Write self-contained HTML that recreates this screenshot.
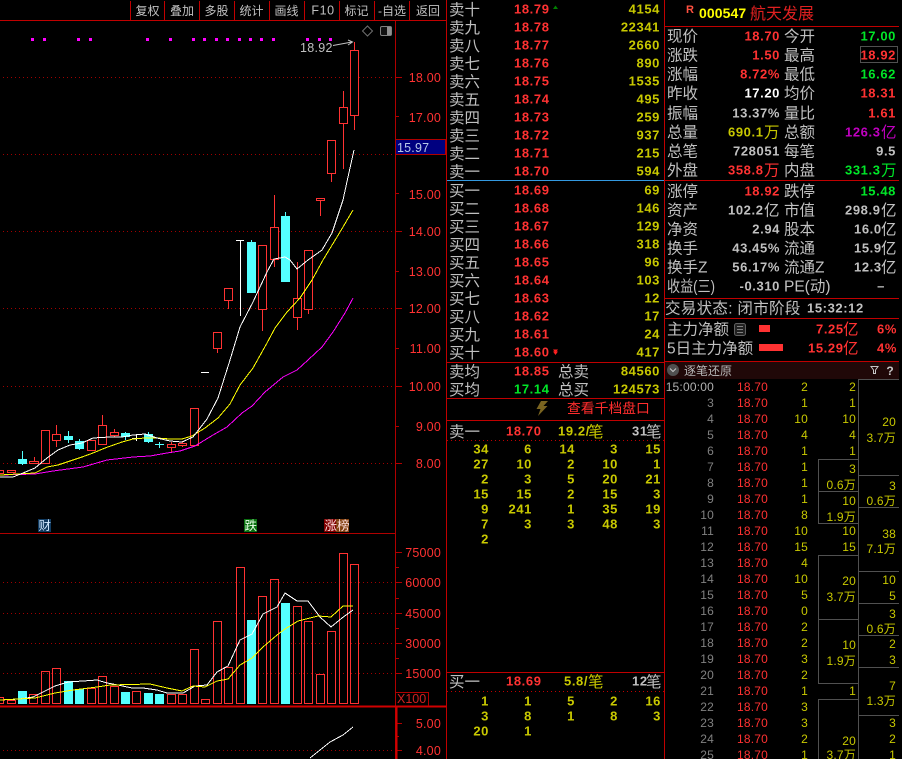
<!DOCTYPE html>
<html lang="zh">
<head>
<meta charset="utf-8">
<title>000547 航天发展</title>
<style>
html,body{margin:0;padding:0;background:#000;width:902px;height:759px;overflow:hidden}
svg{display:block;position:absolute;left:0;top:0}
text{font-family:"Liberation Sans","WenQuanYi Zen Hei","Noto Sans CJK SC",sans-serif;white-space:pre}
.c{font-size:15.5px;fill:#c0c0c0}
.b{font-size:13px;font-weight:bold;letter-spacing:.6px}
.r{fill:#ff3232}.g{fill:#00e628}.y{fill:#c8c800}.w{fill:#c0c0c0}.m{fill:#c000c0}.gr{fill:#808080}
.e{text-anchor:end}
.ax{font-size:12.5px;fill:#ff3232;text-anchor:end;letter-spacing:.2px}
.t{font-size:12px;letter-spacing:.2px}
.tb{font-size:12px;fill:#c0c0c0;text-anchor:middle}
.ln{shape-rendering:crispEdges}
polyline{shape-rendering:crispEdges}
</style>
</head>
<body>
<svg width="902" height="759" viewBox="0 0 902 759" xmlns="http://www.w3.org/2000/svg">
<rect width="902" height="759" fill="#000"/>

<!-- toolbar -->
<g class="ln" stroke="#c00000" fill="none">
<path d="M0 20.500H446M130.500 1V20M164.500 1V20M199.500 1V20M234.500 1V20M269.500 1V20M304.500 1V20M339.500 1V20M374.500 1V20M409.500 1V20"/>
</g>
<text class="tb" x="147.500" y="15">复权</text>
<text class="tb" x="182" y="15">叠加</text>
<text class="tb" x="216.500" y="15">多股</text>
<text class="tb" x="251.500" y="15">统计</text>
<text class="tb" x="286.500" y="15">画线</text>
<text class="tb" x="323" y="14.500" style="letter-spacing:.6px;font-size:12.500px">F10</text>
<text class="tb" x="356.500" y="15">标记</text>
<text class="tb" x="392" y="15">-自选</text>
<text class="tb" x="428" y="15">返回</text>

<!-- grid -->
<g class="ln" stroke="#a00000" stroke-dasharray="1 3" fill="none">
<path d="M3 77.500H395M3 154.500H395M3 231.500H395M3 308.500H395M3 386.500H395M3 463.500H395"/>
<path d="M3 582.500H395M3 613.500H395M3 643.500H395M3 673.500H395M3 750.500H395"/>
</g>

<!-- axis -->
<g class="ln" stroke="#b00000" fill="none">
<path d="M395.500 21V759"/>
<path d="M395 77.500H402M395 116.500H399M395 154.500H402M395 193.500H399M395 231.500H402M395 271.500H399M395 308.500H402M395 348.500H399M395 386.500H402M395 426.500H399M395 463.500H402"/>
<path d="M395 552.500H402M395 567.500H399M395 582.500H402M395 598.500H399M395 613.500H402M395 628.500H399M395 643.500H402M395 658.500H399M395 673.500H402"/>
<path d="M395 723.500H402M395 736.500H399M395 750.500H402"/>
<path d="M0 533.500H395"/>
</g>
<path class="ln" d="M0 706.500H446M396.500 706V759" stroke="#d00000" stroke-width="2" fill="none"/>

<g>
<text class="ax" x="441" y="82">18.00</text>
<text class="ax" x="441" y="122">17.00</text>
<text class="ax" x="441" y="199">15.00</text>
<text class="ax" x="441" y="236">14.00</text>
<text class="ax" x="441" y="276">13.00</text>
<text class="ax" x="441" y="313">12.00</text>
<text class="ax" x="441" y="353">11.00</text>
<text class="ax" x="441" y="391">10.00</text>
<text class="ax" x="441" y="431">9.00</text>
<text class="ax" x="441" y="468">8.00</text>
<text class="ax" x="441" y="557">75000</text>
<text class="ax" x="441" y="587">60000</text>
<text class="ax" x="441" y="618">45000</text>
<text class="ax" x="441" y="648">30000</text>
<text class="ax" x="441" y="678">15000</text>
<text class="ax" x="441" y="728">5.00</text>
<text class="ax" x="441" y="755">4.00</text>
</g>

<!-- current price flag -->
<rect class="ln" x="395.500" y="139.500" width="50" height="15" fill="#000080" stroke="#b00000"/>
<text x="397" y="152" style="font-size:12.5px;letter-spacing:.2px" fill="#b8c8e8">15.97</text>

<!-- magenta dots -->
<g class="ln" fill="#ff00ff">
<rect x="31" y="38" width="3" height="3"/><rect x="43" y="38" width="3" height="3"/><rect x="77" y="38" width="3" height="3"/><rect x="89" y="38" width="3" height="3"/><rect x="146" y="38" width="3" height="3"/><rect x="169" y="38" width="3" height="3"/><rect x="192" y="38" width="3" height="3"/><rect x="203" y="38" width="3" height="3"/><rect x="215" y="38" width="3" height="3"/><rect x="226" y="38" width="3" height="3"/><rect x="238" y="38" width="3" height="3"/><rect x="249" y="38" width="3" height="3"/><rect x="260" y="38" width="3" height="3"/><rect x="272" y="38" width="3" height="3"/><rect x="306" y="38" width="3" height="3"/><rect x="318" y="38" width="3" height="3"/><rect x="329" y="38" width="3" height="3"/>
</g>

<!-- top right chart icons -->
<path d="M367.500 26L372.500 31L367.500 36L362.500 31Z" fill="none" stroke="#707070"/>
<rect x="380.500" y="26.500" width="11" height="9" rx="1.500" fill="#111" stroke="#808080"/>
<rect class="ln" x="387" y="27" width="4" height="8" fill="#909090"/>
<text x="300" y="52" style="font-size:12.500px;letter-spacing:.3px" fill="#c0c0c0">18.92</text>
<path d="M333 45.500L352 42M348 40L352.500 42L348 45" fill="none" stroke="#c0c0c0"/>

<!-- candles: red wicks -->
<g class="ln">
<path stroke="#ff3232" fill="none" d="M11.500 472V473M34.500 457V461M56.500 425V447M102.500 415V425M114.500 429V437M171.500 442V453M182.500 441V447M217.500 348V353M228.500 300V309M262.500 309V331M274.500 195V267M297.500 262V330M308.500 309V314M320.500 200V216M331.500 173V182M343.500 91V169M354.500 42V130"/>
<g fill="#000" stroke="#ff3232">
<rect x="-1.500" y="470.500" width="5" height="3"/>
<rect x="7.500" y="470.500" width="8" height="2"/>
<rect x="29.500" y="461.500" width="9" height="2"/>
<rect x="41.500" y="430.500" width="8" height="33"/>
<rect x="52.500" y="434.500" width="8" height="6"/>
<rect x="87.500" y="440.500" width="8" height="10"/>
<rect x="98.500" y="425.500" width="8" height="19"/>
<rect x="110.500" y="432.500" width="8" height="3"/>
<rect x="167.500" y="444.500" width="8" height="3"/>
<rect x="178.500" y="443.500" width="8" height="2"/>
<rect x="190.500" y="408.500" width="8" height="37"/>
<rect x="213.500" y="332.500" width="8" height="16"/>
<rect x="224.500" y="288.500" width="8" height="12"/>
<rect x="258.500" y="245.500" width="8" height="64"/>
<rect x="270.500" y="227.500" width="8" height="32"/>
<rect x="293.500" y="298.500" width="8" height="19"/>
<rect x="304.500" y="250.500" width="8" height="59"/>
<rect x="316.500" y="198.500" width="8" height="2"/>
<rect x="327.500" y="140.500" width="8" height="33"/>
<rect x="339.500" y="107.500" width="8" height="16"/>
<rect x="350.500" y="50.500" width="8" height="65"/>
</g>
<path stroke="#54ffff" fill="none" d="M22.500 451V465M68.500 431V443M79.500 439V450M125.500 432V440M148.500 432V443M159.500 442V448M155 444.500H164M251.500 240V243M285.500 212V216"/>
<g fill="#54ffff">
<rect x="18" y="459" width="9" height="5"/>
<rect x="64" y="436" width="9" height="4"/>
<rect x="75" y="441" width="9" height="8"/>
<rect x="121" y="433" width="9" height="4"/>
<rect x="144" y="434" width="9" height="8"/>
<rect x="247" y="242" width="9" height="51"/>
<rect x="281" y="216" width="9" height="66"/>
</g>
<path stroke="#ffffff" fill="none" d="M136.500 434V441M132 438.500H141M201 372.500H209M236 240.500H244M240.500 240V316"/>
</g>

<!-- MA lines -->
<g fill="none" stroke-width="1">
<polyline stroke="#ff00ff" points="0,475 35,474 53,471 83,467 107,460 133,457 150,456 167,453 180,451 195,446 213,435 227,427 242,413 252,406 265,392 283,377 297,370 308,360 322,347 333,332 345,313 353,298"/>
<polyline stroke="#ffff00" points="0,475 35,473 47,467 58,465 82,457 93,453 105,448 122,442 133,439 145,438 157,438 170,439 182,439 192,436 205,428 218,418 230,404 240,385 253,368 267,343 275,328 287,312 300,298 312,280 323,260 337,237 343,227 353,210"/>
<polyline stroke="#ffffff" points="0,477 13,477 23,473 35,468 47,458 58,450 70,445 82,443 93,438 110,437 122,437 133,435 145,434 157,438 170,441 182,442 193,437 207,419 218,398 230,360 240,327 253,302 267,272 274,259 285,257 290,260 297,269 308,260 322,250 332,233 343,200 348,177 354,150"/>
</g>

<!-- event tags -->
<rect x="38" y="519" width="13" height="13" fill="#103a60"/>
<text x="38.500" y="530" style="font-size:12.500px" fill="#d0e8ff">财</text>
<rect x="244" y="519" width="13" height="13" fill="#0a7010"/>
<text x="244.500" y="530" style="font-size:12.500px" fill="#e8ffe8">跌</text>
<rect x="324" y="519" width="13" height="13" fill="#800000"/>
<rect x="336" y="519" width="13" height="13" fill="#804010"/>
<text x="324.500" y="530" style="font-size:12.500px" fill="#ffe0e0">涨榜</text>

<!-- volume bars -->
<g class="ln" fill="none" stroke="#ff3232">
<rect x="-1.500" y="697.500" width="5" height="6"/>
<rect x="7.500" y="700.500" width="8" height="3"/>
<rect x="29.500" y="694.500" width="8" height="9"/>
<rect x="41.500" y="671.500" width="8" height="32"/>
<rect x="52.500" y="668.500" width="8" height="35"/>
<rect x="87.500" y="688.500" width="8" height="15"/>
<rect x="98.500" y="676.500" width="8" height="27"/>
<rect x="110.500" y="686.500" width="8" height="17"/>
<rect x="132.500" y="691.500" width="8" height="12"/>
<rect x="167.500" y="694.500" width="8" height="9"/>
<rect x="178.500" y="694.500" width="8" height="9"/>
<rect x="190.500" y="649.500" width="8" height="54"/>
<rect x="201.500" y="699.500" width="8" height="4"/>
<rect x="213.500" y="621.500" width="8" height="82"/>
<rect x="224.500" y="667.500" width="8" height="36"/>
<rect x="236.500" y="567.500" width="8" height="136"/>
<rect x="258.500" y="596.500" width="8" height="107"/>
<rect x="270.500" y="579.500" width="8" height="124"/>
<rect x="293.500" y="606.500" width="8" height="97"/>
<rect x="304.500" y="621.500" width="8" height="82"/>
<rect x="316.500" y="674.500" width="8" height="29"/>
<rect x="327.500" y="631.500" width="8" height="72"/>
<rect x="339.500" y="553.500" width="8" height="150"/>
<rect x="350.500" y="564.500" width="8" height="139"/>
</g>
<g class="ln" fill="#54ffff">
<rect x="18" y="691" width="9" height="13"/>
<rect x="64" y="681" width="9" height="23"/>
<rect x="75" y="689" width="9" height="15"/>
<rect x="121" y="692" width="9" height="12"/>
<rect x="144" y="693" width="9" height="11"/>
<rect x="155" y="694" width="9" height="10"/>
<rect x="247" y="620" width="9" height="84"/>
<rect x="281" y="603" width="9" height="101"/>
</g>
<g fill="none">
<polyline stroke="#ffffff" points="0,700 20,699 33,697 43,692 55,686 68,682 83,681 97,680 107,683 113,684 132,688 143,688 157,690 167,693 183,693 195,686 207,685 217,672 228,666 240,640 252,634 263,614 277,607 285,593 297,601 308,601 320,617 331,627 342,618 353,610"/>
<polyline stroke="#ffff00" points="0,700 35,698 55,693 73,690 97,687 110,685 150,684 167,688 182,691 193,686 205,687 217,681 228,679 240,665 252,658 263,647 277,635 285,629 298,621 318,616 331,617 343,606 353,606"/>
<polyline stroke="#ffffff" points="310,758 330,742 343,735 353,727"/>
</g>
<path class="ln" d="M395.500 692.500H428.500V706" fill="none" stroke="#b00000"/>
<text x="397" y="703" style="font-size:12.500px" fill="#d02020">X100</text>

<!-- panel dividers -->
<g class="ln" fill="none" stroke="#c00000">
<path d="M446.500 0V759M664.500 0V759"/>
<path d="M446 362.500H664M446 398.500H664M446 420.500H664M446 672.500H664"/>
<path d="M664 26.500H899M664 180.500H899M664 298.500H899M664 318.500H899M664 361.500H899"/>
</g>
<path class="ln" d="M447 180.500H664" stroke="#3399e0" fill="none"/>
<path class="ln" d="M447 440.500H664M447 691.500H664" stroke="#c00000" stroke-dasharray="1 3" fill="none"/>

<!-- sell book -->
<g class="c">
<text x="449" y="15">卖十</text><text x="449" y="33">卖九</text><text x="449" y="51">卖八</text><text x="449" y="69">卖七</text><text x="449" y="87">卖六</text><text x="449" y="105">卖五</text><text x="449" y="123">卖四</text><text x="449" y="141">卖三</text><text x="449" y="159">卖二</text><text x="449" y="177">卖一</text>
<text x="449" y="196">买一</text><text x="449" y="214">买二</text><text x="449" y="232">买三</text><text x="449" y="250">买四</text><text x="449" y="268">买五</text><text x="449" y="286">买六</text><text x="449" y="304">买七</text><text x="449" y="322">买八</text><text x="449" y="340">买九</text><text x="449" y="358">买十</text>
<text x="449" y="377">卖均</text><text x="449" y="395">买均</text>
<text x="558" y="377">总卖</text><text x="558" y="395">总买</text>
<text x="449" y="437">卖一</text><text x="449" y="687">买一</text>
</g>
<g class="b r">
<text x="514" y="13.500">18.79</text><text x="514" y="31.500">18.78</text><text x="514" y="49.500">18.77</text><text x="514" y="67.500">18.76</text><text x="514" y="85.500">18.75</text><text x="514" y="103.500">18.74</text><text x="514" y="121.500">18.73</text><text x="514" y="139.500">18.72</text><text x="514" y="157.500">18.71</text><text x="514" y="175.500">18.70</text>
<text x="514" y="194.500">18.69</text><text x="514" y="212.500">18.68</text><text x="514" y="230.500">18.67</text><text x="514" y="248.500">18.66</text><text x="514" y="266.500">18.65</text><text x="514" y="284.500">18.64</text><text x="514" y="302.500">18.63</text><text x="514" y="320.500">18.62</text><text x="514" y="338.500">18.61</text><text x="514" y="356.500">18.60</text>
<text x="514" y="375.500">18.85</text>
<text x="506" y="435.500">18.70</text><text x="506" y="685.500">18.69</text>
</g>
<text class="b g" x="514" y="393.500">17.14</text>
<g class="b y e">
<text x="660" y="13.500">4154</text><text x="660" y="31.500">22341</text><text x="660" y="49.500">2660</text><text x="660" y="67.500">890</text><text x="660" y="85.500">1535</text><text x="660" y="103.500">495</text><text x="660" y="121.500">259</text><text x="660" y="139.500">937</text><text x="660" y="157.500">215</text><text x="660" y="175.500">594</text>
<text x="660" y="194.500">69</text><text x="660" y="212.500">146</text><text x="660" y="230.500">129</text><text x="660" y="248.500">318</text><text x="660" y="266.500">96</text><text x="660" y="284.500">103</text><text x="660" y="302.500">12</text><text x="660" y="320.500">17</text><text x="660" y="338.500">24</text><text x="660" y="356.500">417</text>
<text x="660" y="375.500">84560</text><text x="660" y="393.500">124573</text>
</g>
<path d="M553 9L555.500 5.500L558 9Z" fill="#008000"/>
<path d="M553 349.500H558L556.500 351.500H558L555.500 355L553 351.500H554.500Z" fill="#ff2020"/>

<!-- lightning + link -->
<path d="M541 401H548L543.500 406H547.500L538 416L540.500 409H536.500Z" fill="#7a6420"/>
<text x="567" y="413" style="font-size:13.800px" fill="#ff2d2d">查看千档盘口</text>

<!-- queue headers -->
<text class="b y" x="558" y="435.500">19.2/</text><text x="588" y="437" style="font-size:15.500px" fill="#c8c800">笔</text>
<text class="b w" x="632" y="435.500">31</text><text x="646" y="437" style="font-size:15.500px" fill="#c0c0c0">笔</text>
<text class="b y" x="564" y="685.500">5.8/</text><text x="588" y="687" style="font-size:15.500px" fill="#c8c800">笔</text>
<text class="b w" x="632" y="685.500">12</text><text x="646" y="687" style="font-size:15.500px" fill="#c0c0c0">笔</text>

<!-- queue grid -->
<g class="b y e">
<text x="489" y="453.500">34</text><text x="532" y="453.500">6</text><text x="575" y="453.500">14</text><text x="618" y="453.500">3</text><text x="661" y="453.500">15</text>
<text x="489" y="468.500">27</text><text x="532" y="468.500">10</text><text x="575" y="468.500">2</text><text x="618" y="468.500">10</text><text x="661" y="468.500">1</text>
<text x="489" y="483.500">2</text><text x="532" y="483.500">3</text><text x="575" y="483.500">5</text><text x="618" y="483.500">20</text><text x="661" y="483.500">21</text>
<text x="489" y="498.500">15</text><text x="532" y="498.500">15</text><text x="575" y="498.500">2</text><text x="618" y="498.500">15</text><text x="661" y="498.500">3</text>
<text x="489" y="513.500">9</text><text x="532" y="513.500">241</text><text x="575" y="513.500">1</text><text x="618" y="513.500">35</text><text x="661" y="513.500">19</text>
<text x="489" y="528.500">7</text><text x="532" y="528.500">3</text><text x="575" y="528.500">3</text><text x="618" y="528.500">48</text><text x="661" y="528.500">3</text>
<text x="489" y="543.500">2</text>
<text x="489" y="705.500">1</text><text x="532" y="705.500">1</text><text x="575" y="705.500">5</text><text x="618" y="705.500">2</text><text x="661" y="705.500">16</text>
<text x="489" y="720.500">3</text><text x="532" y="720.500">8</text><text x="575" y="720.500">1</text><text x="618" y="720.500">8</text><text x="661" y="720.500">3</text>
<text x="489" y="735.500">20</text><text x="532" y="735.500">1</text>
</g>

<!-- stock header -->
<text x="686" y="13" style="font-size:11px;font-weight:bold" fill="#ff5040">R</text>
<text x="699" y="18" style="font-size:14px;font-weight:bold;letter-spacing:.1px" fill="#ffff00">000547</text>
<text x="750" y="19" style="font-size:16px" fill="#e02020">航天发展</text>

<!-- quote labels -->
<g class="c">
<text x="667" y="41.500">现价</text><text x="784" y="41.500">今开</text>
<text x="667" y="60.500">涨跌</text><text x="784" y="60.500">最高</text>
<text x="667" y="79.500">涨幅</text><text x="784" y="79.500">最低</text>
<text x="667" y="98.500">昨收</text><text x="784" y="98.500">均价</text>
<text x="667" y="118.500">振幅</text><text x="784" y="118.500">量比</text>
<text x="667" y="137.500">总量</text><text x="784" y="137.500">总额</text>
<text x="667" y="156.500">总笔</text><text x="784" y="156.500">每笔</text>
<text x="667" y="175.500">外盘</text><text x="784" y="175.500">内盘</text>
<text x="667" y="196.500">涨停</text><text x="784" y="196.500">跌停</text>
<text x="667" y="215.500">资产</text><text x="784" y="215.500">市值</text>
<text x="667" y="234.500">净资</text><text x="784" y="234.500">股本</text>
<text x="667" y="253.500">换手</text><text x="784" y="253.500">流通</text>
<text x="667" y="272.500">换手Z</text><text x="784" y="272.500">流通Z</text>
<text x="667" y="291.500" textLength="48" lengthAdjust="spacingAndGlyphs">收益(三)</text><text x="784" y="291.500">PE(动)</text>
<text x="665" y="313.500" style="letter-spacing:.3px">交易状态: 闭市阶段</text>
<text x="667" y="334.500">主力净额</text>
<text x="667" y="353.500">5日主力净额</text>
</g>

<!-- quote values -->
<rect class="ln" x="860.500" y="46.500" width="37" height="16" fill="none" stroke="#505050"/>
<g class="b e">
<text class="r" x="780" y="40.500">18.70</text><text class="g" x="896" y="40.500">17.00</text>
<text class="r" x="780" y="59.500">1.50</text><text class="r" x="896" y="59.500">18.92</text>
<text class="r" x="780" y="78.500">8.72%</text><text class="g" x="896" y="78.500">16.62</text>
<text x="780" y="97.500" fill="#ffffff">17.20</text><text class="r" x="896" y="97.500">18.31</text>
<text class="w" x="780" y="117.500">13.37%</text><text class="r" x="896" y="117.500">1.61</text>
<text class="w" x="780" y="155.500">728051</text><text class="w" x="896" y="155.500">9.5</text>
<text class="r" x="780" y="195.500">18.92</text><text class="g" x="896" y="195.500">15.48</text>
<text class="w" x="780" y="233.500">2.94</text>
<text class="w" x="780" y="252.500">43.45%</text>
<text class="w" x="780" y="271.500">56.17%</text>
<text class="w" x="780" y="290.500">-0.310</text>
<text class="w" x="885" y="290.500">–</text>
<text class="r" x="897" y="333.500">6%</text>
<text class="r" x="897" y="352.500">4%</text>
</g>
<g class="b">
<text class="y" x="728" y="136.500">690.1</text><text x="764" y="137.500" style="font-size:15.500px;font-weight:normal" fill="#c8c800">万</text>
<text class="m" x="845" y="136.500">126.3</text><text x="881" y="137.500" style="font-size:15.500px;font-weight:normal" fill="#c000c0">亿</text>
<text class="r" x="728" y="174.500">358.8</text><text x="764" y="175.500" style="font-size:15.500px;font-weight:normal" fill="#ff3232">万</text>
<text class="g" x="845" y="174.500">331.3</text><text x="881" y="175.500" style="font-size:15.500px;font-weight:normal" fill="#00e628">万</text>
<text class="w" x="728" y="214.500">102.2</text><text x="764" y="215.500" style="font-size:15.500px;font-weight:normal" fill="#c0c0c0">亿</text>
<text class="w" x="845" y="214.500">298.9</text><text x="881" y="215.500" style="font-size:15.500px;font-weight:normal" fill="#c0c0c0">亿</text>
<text class="w" x="854" y="233.500">16.0</text><text x="881" y="234.500" style="font-size:15.500px;font-weight:normal" fill="#c0c0c0">亿</text>
<text class="w" x="854" y="252.500">15.9</text><text x="881" y="253.500" style="font-size:15.500px;font-weight:normal" fill="#c0c0c0">亿</text>
<text class="w" x="854" y="271.500">12.3</text><text x="881" y="272.500" style="font-size:15.500px;font-weight:normal" fill="#c0c0c0">亿</text>
<text class="w" x="807" y="312.500">15:32:12</text>
<text class="r" x="816" y="333.500">7.25</text><text x="843" y="334.500" style="font-size:15.500px;font-weight:normal" fill="#ff3232">亿</text>
<text class="r" x="808" y="352.500">15.29</text><text x="843" y="353.500" style="font-size:15.500px;font-weight:normal" fill="#ff3232">亿</text>
</g>

<!-- net flow -->
<rect x="734.500" y="323.500" width="11" height="12" rx="2" fill="#222" stroke="#606060"/>
<path class="ln" d="M737 326.500H743M737 329.500H743M737 332.500H743" stroke="#808080"/>
<rect class="ln" x="759" y="325" width="11" height="7" fill="#ff3232"/>
<rect class="ln" x="759" y="344" width="24" height="7" fill="#ff3232"/>

<!-- tick header -->
<rect class="ln" x="665" y="362" width="234" height="17" fill="#200808"/>
<circle cx="673" cy="370" r="6" fill="#505050"/>
<path d="M670 368.500L673 371.500L676 368.500" fill="none" stroke="#c8c8c8"/>
<text x="684" y="375" style="font-size:12px" fill="#b8b8b8">逐笔还原</text>
<path d="M871 366.500H878L875.500 370V373.500H873.500V370Z" fill="none" stroke="#c8c8c8"/>
<text x="890" y="375" style="font-size:12px;font-weight:bold;text-anchor:middle" fill="#c8c8c8">?</text>

<!-- tick table borders -->
<g class="ln" fill="none" stroke="#505050">
<path d="M858.500 379V759M858 379.500H899"/>
<path d="M818.500 459V523M818 459.500H858M818 491.500H858M818 523.500H858"/>
<path d="M818.500 555V683M818 555.500H858M818 619.500H858M818 683.500H858"/>
<path d="M818.500 699V759M818 699.500H858"/>
<path d="M858 475.500H899M858 507.500H899M858 571.500H899M858 603.500H899M858 635.500H899M858 667.500H899M858 715.500H899"/>
</g>

<!-- tick table -->
<g class="t e gr">
<text x="714" y="391" style="fill:#b0b0b0">15:00:00</text>
<text x="714" y="407">3</text><text x="714" y="423">4</text><text x="714" y="439">5</text><text x="714" y="455">6</text><text x="714" y="471">7</text><text x="714" y="487">8</text><text x="714" y="503">9</text><text x="714" y="519">10</text><text x="714" y="535">11</text><text x="714" y="551">12</text><text x="714" y="567">13</text><text x="714" y="583">14</text><text x="714" y="599">15</text><text x="714" y="615">16</text><text x="714" y="631">17</text><text x="714" y="647">18</text><text x="714" y="663">19</text><text x="714" y="679">20</text><text x="714" y="695">21</text><text x="714" y="711">22</text><text x="714" y="727">23</text><text x="714" y="743">24</text><text x="714" y="759">25</text>
</g>
<g class="t r">
<text x="737" y="391">18.70</text><text x="737" y="407">18.70</text><text x="737" y="423">18.70</text><text x="737" y="439">18.70</text><text x="737" y="455">18.70</text><text x="737" y="471">18.70</text><text x="737" y="487">18.70</text><text x="737" y="503">18.70</text><text x="737" y="519">18.70</text><text x="737" y="535">18.70</text><text x="737" y="551">18.70</text><text x="737" y="567">18.70</text><text x="737" y="583">18.70</text><text x="737" y="599">18.70</text><text x="737" y="615">18.70</text><text x="737" y="631">18.70</text><text x="737" y="647">18.70</text><text x="737" y="663">18.70</text><text x="737" y="679">18.70</text><text x="737" y="695">18.70</text><text x="737" y="711">18.70</text><text x="737" y="727">18.70</text><text x="737" y="743">18.70</text><text x="737" y="759">18.70</text>
</g>
<g class="t e y">
<text x="808" y="391">2</text><text x="808" y="407">1</text><text x="808" y="423">10</text><text x="808" y="439">4</text><text x="808" y="455">1</text><text x="808" y="471">1</text><text x="808" y="487">1</text><text x="808" y="503">1</text><text x="808" y="519">8</text><text x="808" y="535">10</text><text x="808" y="551">15</text><text x="808" y="567">4</text><text x="808" y="583">10</text><text x="808" y="599">5</text><text x="808" y="615">0</text><text x="808" y="631">2</text><text x="808" y="647">2</text><text x="808" y="663">3</text><text x="808" y="679">2</text><text x="808" y="695">1</text><text x="808" y="711">3</text><text x="808" y="727">3</text><text x="808" y="743">2</text><text x="808" y="759">1</text>
<text x="856" y="391">2</text><text x="856" y="407">1</text><text x="856" y="423">10</text><text x="856" y="439">4</text><text x="856" y="455">1</text>
<text x="856" y="473">3</text><text x="856" y="489">0.6万</text>
<text x="856" y="505">10</text><text x="856" y="521">1.9万</text>
<text x="856" y="535">10</text><text x="856" y="551">15</text>
<text x="856" y="585">20</text><text x="856" y="601">3.7万</text>
<text x="856" y="649">10</text><text x="856" y="665">1.9万</text>
<text x="856" y="695">1</text>
<text x="856" y="745">20</text><text x="856" y="759">3.7万</text>
<text x="896" y="426">20</text><text x="896" y="442">3.7万</text>
<text x="896" y="490">3</text><text x="896" y="505">0.6万</text>
<text x="896" y="538">38</text><text x="896" y="553">7.1万</text>
<text x="896" y="584">10</text><text x="896" y="600">5</text>
<text x="896" y="618">3</text><text x="896" y="633">0.6万</text>
<text x="896" y="648">2</text><text x="896" y="664">3</text>
<text x="896" y="690">7</text><text x="896" y="705">1.3万</text>
<text x="896" y="727">3</text><text x="896" y="743">2</text><text x="896" y="759">1</text>
</g>
</svg>
</body>
</html>
